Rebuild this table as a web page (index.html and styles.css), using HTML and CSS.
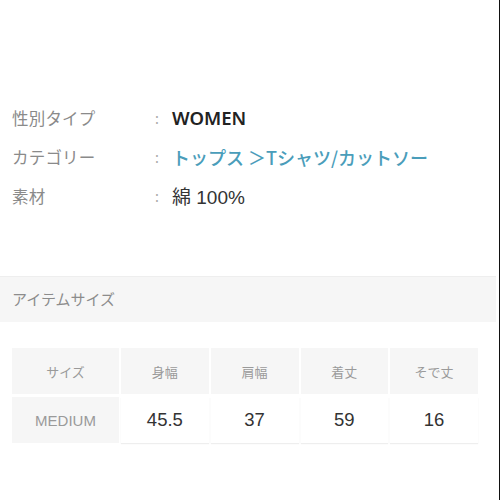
FILE: index.html
```html
<!DOCTYPE html>
<html lang="ja">
<head>
<meta charset="utf-8">
<link rel="stylesheet" href="styles.css">
</head>
<body>
<div class="page">
  <dl class="specs">
    <div class="row"><dt>性別タイプ</dt><dd class="colon">:</dd><dd class="val strong">WOMEN</dd></div>
    <div class="row"><dt>カテゴリー</dt><dd class="colon">:</dd><dd class="val link">トップス ＞Tシャツ/カットソー</dd></div>
    <div class="row"><dt>素材</dt><dd class="colon">:</dd><dd class="val">綿 100%</dd></div>
  </dl>
  <div class="section">アイテムサイズ</div>
  <table class="sizes">
    <thead>
      <tr><th>サイズ</th><th>身幅</th><th>肩幅</th><th>着丈</th><th>そで丈</th></tr>
    </thead>
    <tbody>
      <tr><th>MEDIUM</th><td>45.5</td><td>37</td><td>59</td><td>16</td></tr>
    </tbody>
  </table>
</div>
</body>
</html>
```
FILE: styles.css
```css
html, body { margin: 0; padding: 0; background: #fff; }
body {
  font-family: "Noto Sans CJK JP", "Noto Sans", sans-serif;
  width: 500px;
  height: 500px;
  overflow: hidden;
}
.page {
  height: 500px;
  border-right: 1px solid #111;
  box-sizing: border-box;
  padding-top: 98px;
}
.specs { margin: 0; padding: 0 0 0 12px; }
.row {
  display: flex;
  align-items: center;
  height: 39px;
}
dt {
  width: 143px;
  font-size: 16.5px;
  color: #8a8a8a;
  letter-spacing: 0.2px;
}
dd { margin: 0; }
.colon { width: 17px; color: #aaa; font-size: 14px; }
.val { font-size: 19px; color: #333; font-family: "Liberation Sans", "Noto Sans CJK JP", sans-serif; }
.strong { font-weight: 600; color: #222; font-size: 18.5px; font-family: "Noto Sans", "Noto Sans CJK JP", sans-serif; }
.link { color: #4a9dba; font-weight: 500; font-size: 18px; font-family: "Noto Sans CJK JP", sans-serif; }
.section {
  margin-top: 61px;
  margin-right: 3px;
  border-top: 1px solid #eee;
  background: #f6f6f6;
  height: 45px;
  line-height: 44px;
  padding-left: 12px;
  font-size: 15px;
  color: #8c8c8c;
}
.sizes {
  margin: 23px 0 0 10px;
  border-collapse: separate;
  border-spacing: 2px 3px;
  width: 470px;
  table-layout: fixed;
}
.sizes th, .sizes td {
  text-align: center;
  background: #f6f6f6;
  font-weight: 400;
}
.sizes thead th {
  height: 44px;
  font-size: 13px;
  color: #9a9a9a;
}
.sizes thead th:first-child { width: 105px; }
.sizes tbody th {
  height: 44px;
  font-size: 15px;
  color: #9a9a9a;
  font-family: "Liberation Sans", sans-serif;
}
.sizes tbody td {
  background: #fff;
  font-size: 18.5px;
  color: #333;
  font-family: "Liberation Sans", sans-serif;
  box-shadow: 0 1px 1px #eee;
}
```
